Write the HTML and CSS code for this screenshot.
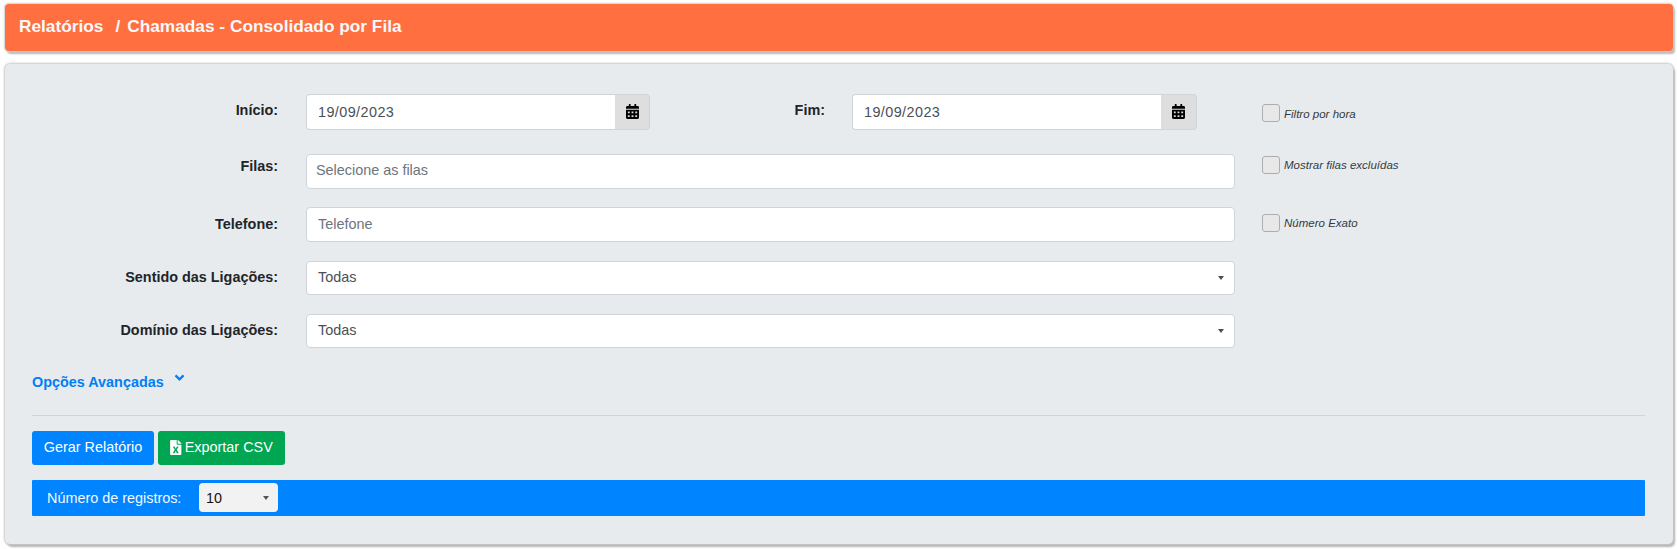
FILE: index.html
```html
<!DOCTYPE html>
<html lang="pt-BR">
<head>
<meta charset="utf-8">
<title>Chamadas - Consolidado por Fila</title>
<link rel="stylesheet" href="styles.css">
</head>
<body>
<header class="page-title">
  <span class="crumb">Relatórios</span><span class="sep">/</span><span>Chamadas - Consolidado por Fila</span>
</header>
<main class="panel">
  <form class="filters">
    <div class="row row-first">
      <label class="label">Início:</label>
      <div class="date-group">
        <input class="field date-field" type="text" value="19/09/2023">
        <span class="addon"><svg class="cal" viewBox="0 0 448 512"><path d="M0 464c0 26.5 21.5 48 48 48h352c26.5 0 48-21.5 48-48V192H0v272zm320-196c0-6.6 5.4-12 12-12h40c6.6 0 12 5.4 12 12v40c0 6.6-5.4 12-12 12h-40c-6.6 0-12-5.4-12-12v-40zm0 128c0-6.6 5.4-12 12-12h40c6.6 0 12 5.4 12 12v40c0 6.6-5.4 12-12 12h-40c-6.6 0-12-5.4-12-12v-40zM192 268c0-6.6 5.4-12 12-12h40c6.6 0 12 5.4 12 12v40c0 6.6-5.4 12-12 12h-40c-6.6 0-12-5.4-12-12v-40zm0 128c0-6.6 5.4-12 12-12h40c6.6 0 12 5.4 12 12v40c0 6.6-5.4 12-12 12h-40c-6.6 0-12-5.4-12-12v-40zM64 268c0-6.6 5.4-12 12-12h40c6.6 0 12 5.4 12 12v40c0 6.6-5.4 12-12 12H76c-6.6 0-12-5.4-12-12v-40zm0 128c0-6.6 5.4-12 12-12h40c6.6 0 12 5.4 12 12v40c0 6.6-5.4 12-12 12H76c-6.6 0-12-5.4-12-12v-40zM400 64h-48V16c0-8.8-7.2-16-16-16h-32c-8.8 0-16 7.2-16 16v48H160V16c0-8.8-7.2-16-16-16h-32c-8.8 0-16 7.2-16 16v48H48C21.5 64 0 85.5 0 112v48h448v-48c0-26.5-21.5-48-48-48z"/></svg></span>
      </div>
      <label class="label label-end">Fim:</label>
      <div class="date-group date-group-end">
        <input class="field date-field" type="text" value="19/09/2023">
        <span class="addon addon-end"><svg class="cal" viewBox="0 0 448 512"><path d="M0 464c0 26.5 21.5 48 48 48h352c26.5 0 48-21.5 48-48V192H0v272zm320-196c0-6.6 5.4-12 12-12h40c6.6 0 12 5.4 12 12v40c0 6.6-5.4 12-12 12h-40c-6.6 0-12-5.4-12-12v-40zm0 128c0-6.6 5.4-12 12-12h40c6.6 0 12 5.4 12 12v40c0 6.6-5.4 12-12 12h-40c-6.6 0-12-5.4-12-12v-40zM192 268c0-6.6 5.4-12 12-12h40c6.6 0 12 5.4 12 12v40c0 6.6-5.4 12-12 12h-40c-6.6 0-12-5.4-12-12v-40zm0 128c0-6.6 5.4-12 12-12h40c6.6 0 12 5.4 12 12v40c0 6.6-5.4 12-12 12h-40c-6.6 0-12-5.4-12-12v-40zM64 268c0-6.6 5.4-12 12-12h40c6.6 0 12 5.4 12 12v40c0 6.6-5.4 12-12 12H76c-6.6 0-12-5.4-12-12v-40zm0 128c0-6.6 5.4-12 12-12h40c6.6 0 12 5.4 12 12v40c0 6.6-5.4 12-12 12H76c-6.6 0-12-5.4-12-12v-40zM400 64h-48V16c0-8.8-7.2-16-16-16h-32c-8.8 0-16 7.2-16 16v48H160V16c0-8.8-7.2-16-16-16h-32c-8.8 0-16 7.2-16 16v48H48C21.5 64 0 85.5 0 112v48h448v-48c0-26.5-21.5-48-48-48z"/></svg></span>
      </div>
      <label class="check check-a"><input type="checkbox"><span>Filtro por hora</span></label>
    </div>
    <div class="row row-filas">
      <label class="label">Filas:</label>
      <input class="field wide field-filas" type="text" placeholder="Selecione as filas">
      <label class="check check-b"><input type="checkbox"><span>Mostrar filas excluídas</span></label>
    </div>
    <div class="row row-tel">
      <label class="label">Telefone:</label>
      <input class="field wide" type="text" placeholder="Telefone">
      <label class="check check-c"><input type="checkbox"><span>Número Exato</span></label>
    </div>
    <div class="row row-sel">
      <label class="label">Sentido das Ligações:</label>
      <div class="field wide select-box">Todas</div>
    </div>
    <div class="row row-sel-last">
      <label class="label">Domínio das Ligações:</label>
      <div class="field wide select-box">Todas</div>
    </div>
  </form>
  <a class="advanced" href="#">Opções Avançadas<svg class="chev" viewBox="0 0 12 8"><path d="M1.6 1.4 6 5.8l4.4-4.4" fill="none" stroke="currentColor" stroke-width="2.4"/></svg></a>
  <hr class="divider">
  <div class="actions">
    <button class="btn btn-blue" type="button">Gerar Relatório</button>
    <button class="btn btn-green" type="button"><svg class="xls" viewBox="0 0 384 512"><path d="M224 136V0H24C10.7 0 0 10.7 0 24v464c0 13.3 10.7 24 24 24h336c13.3 0 24-10.7 24-24V160H248c-13.2 0-24-10.8-24-24zm60.1 106.5L224 336l60.1 93.5c5.1 8-.6 18.5-10.1 18.5h-34.9c-4.4 0-8.5-2.4-10.6-6.3C208.9 405.5 192 373 192 373c-6.4 14.8-10 20-36.6 68.8-2.1 3.9-6.1 6.3-10.5 6.3H110c-9.5 0-15.2-10.5-10.1-18.5l60.3-93.5-60.3-93.5c-5.2-8 .6-18.5 10.1-18.5h34.8c4.4 0 8.5 2.4 10.6 6.3 26.1 48.8 20 33.6 36.6 68.5 0 0 6.1-11.7 36.6-68.5 2.1-3.9 6.2-6.3 10.6-6.3H274c9.5-.1 15.2 10.4 10.1 18.4zM384 121.9v6.1H256V0h6.1c6.4 0 12.5 2.5 17 7l97.9 98c4.5 4.5 7 10.6 7 16.9z" fill="#fff"/></svg>Exportar CSV</button>
  </div>
  <div class="records">
    <span class="records-label">Número de registros:</span>
    <div class="records-select">10</div>
  </div>
</main>
</body>
</html>
```

FILE: styles.css
```css
* { box-sizing: border-box; }
html, body { margin: 0; padding: 0; }
body {
  font-family: "Liberation Sans", Arial, sans-serif;
  font-size: 14.4px;
  color: #212529;
  background: #fff;
  height: 549px;
  overflow: hidden;
  padding: 4px 4px 0 5px;
}
.page-title {
  height: 47px;
  background: #ff6f3f;
  color: #f8f9fa;
  font-size: 17.28px;
  font-weight: 700;
  padding: 0 14px 3px;
  display: flex;
  align-items: center;
  border-radius: 4px;
  box-shadow: 0 0 2px 1px #d0d0d0, 2px 3px 2px #b8b8b8;
}
.crumb { margin-right: 12px; }
.sep { margin-right: 7px; }
.panel {
  margin-top: 13px;
  height: 480px;
  background: #e8ebee;
  border-radius: 5px;
  padding: 30px 28px 0 27px;
  box-shadow: 0 0 2px 1px #c8c8c8, 2px 3px 2px #b4b4b4;
}
.row { display: flex; align-items: flex-start; }
.row-first { height: 60px; }
.row-filas { height: 53px; }
.row-tel { height: 54px; }
.row-sel { height: 53px; }
.row-sel-last { height: 52px; }
.label {
  width: 246px;
  margin-right: 28px;
  text-align: right;
  font-weight: 700;
  line-height: 20px;
  flex: none;
  padding-top: 6px;
}
.label-end { width: 100px; margin-left: 75px; margin-right: 27px; }
.row-filas .label { padding-top: 2px; }
.row-tel .label { padding-top: 7px; }
.row-sel .label { padding-top: 6px; }
.row-sel-last .label { padding-top: 6px; }
.field {
  height: 35px;
  background: #fff;
  border: 1px solid #ced4da;
  border-radius: 4px;
  font: 14.4px "Liberation Sans", Arial, sans-serif;
  color: #495057;
  padding: 0 11px 2px;
  outline: none;
}
.field::placeholder { color: #6c757d; opacity: 1; }
.field-filas { padding-left: 9px; padding-bottom: 4px; }
.wide { width: 929px; flex: none; }
.date-group { display: flex; width: 344px; height: 36px; flex: none; }
.date-group-end { width: 345px; }
.date-field {
  flex: 1;
  min-width: 0;
  height: 36px;
  padding-bottom: 0;
  border-right: 0;
  border-radius: 4px 0 0 4px;
  letter-spacing: .42px;
}
.addon {
  width: 35px;
  flex: none;
  background: #dedede;
  border: 1px solid #ced4da;
  border-left: 0;
  border-radius: 0 4px 4px 0;
  padding-bottom: 2px;
  display: flex;
  align-items: center;
  justify-content: center;
}
.addon-end { width: 36px; }
.cal { width: 13px; height: 15px; fill: #000; }
.check {
  display: flex;
  align-items: center;
  font-size: 11.52px;
  font-style: italic;
  color: #343a40;
  height: 18px;
}
.check input {
  appearance: none;
  width: 18px;
  height: 18px;
  margin: 0 4px 0 0;
  background: #e8e8e8;
  border: 1px solid #adadad;
  border-radius: 3px;
  flex: none;
}
.check span { position: relative; top: 1px; }
.check-a { margin: 10px 0 0 65px; }
.check-b { margin: 2px 0 0 27px; }
.check-c { margin: 7px 0 0 27px; }
.check-b span, .check-c span { top: 0; }
.select-box {
  position: relative;
  display: flex;
  align-items: center;
  height: 34px;
}
.row-sel-last .select-box { padding-bottom: 3px; }
.select-box::after, .records-select::after {
  content: "";
  position: absolute;
  right: 10px;
  top: 50%;
  margin-top: -2px;
  border-top: 4px solid #495057;
  border-left: 3.8px solid transparent;
  border-right: 3.8px solid transparent;
}
.records-select::after { right: 9px; border-top-color: #555; }
.advanced {
  display: flex;
  align-items: flex-start;
  margin: 5px 0 0 0;
  height: 24px;
  padding-top: 3px;
  color: #007ff5;
  font-weight: 700;
  font-size: 14.4px;
  text-decoration: none;
  width: 170px;
}
.chev { width: 11px; height: 7.5px; margin: 0 0 0 10px; color: #007ff5; }
.divider {
  margin: 20px 0 15px;
  border: 0;
  border-top: 1px solid #ced4da;
}
.actions { display: flex; gap: 4px; }
.btn {
  height: 34px;
  border: 0;
  border-radius: 3px;
  color: #fff;
  font: 14.4px "Liberation Sans", Arial, sans-serif;
  display: flex;
  align-items: center;
  justify-content: center;
  padding: 0 0 2px;
}
.btn-blue { width: 122px; background: #0084ff; }
.btn-green { width: 127px; background: #00a651; }
.xls { width: 11.5px; height: 15px; margin-right: 3px; }
.records {
  margin-top: 15px;
  height: 36px;
  background: #0084ff;
  color: #f4f8ff;
  display: flex;
  align-items: center;
  padding: 0 0 1px 15px;
  border-radius: 1px;
}
.records-label { width: 152px; flex: none; }
.records-select {
  position: relative;
  width: 79px;
  height: 29px;
  background: #f2f2f2;
  color: #111;
  border-radius: 4px;
  padding-left: 7px;
  display: flex;
  align-items: center;
}
```
